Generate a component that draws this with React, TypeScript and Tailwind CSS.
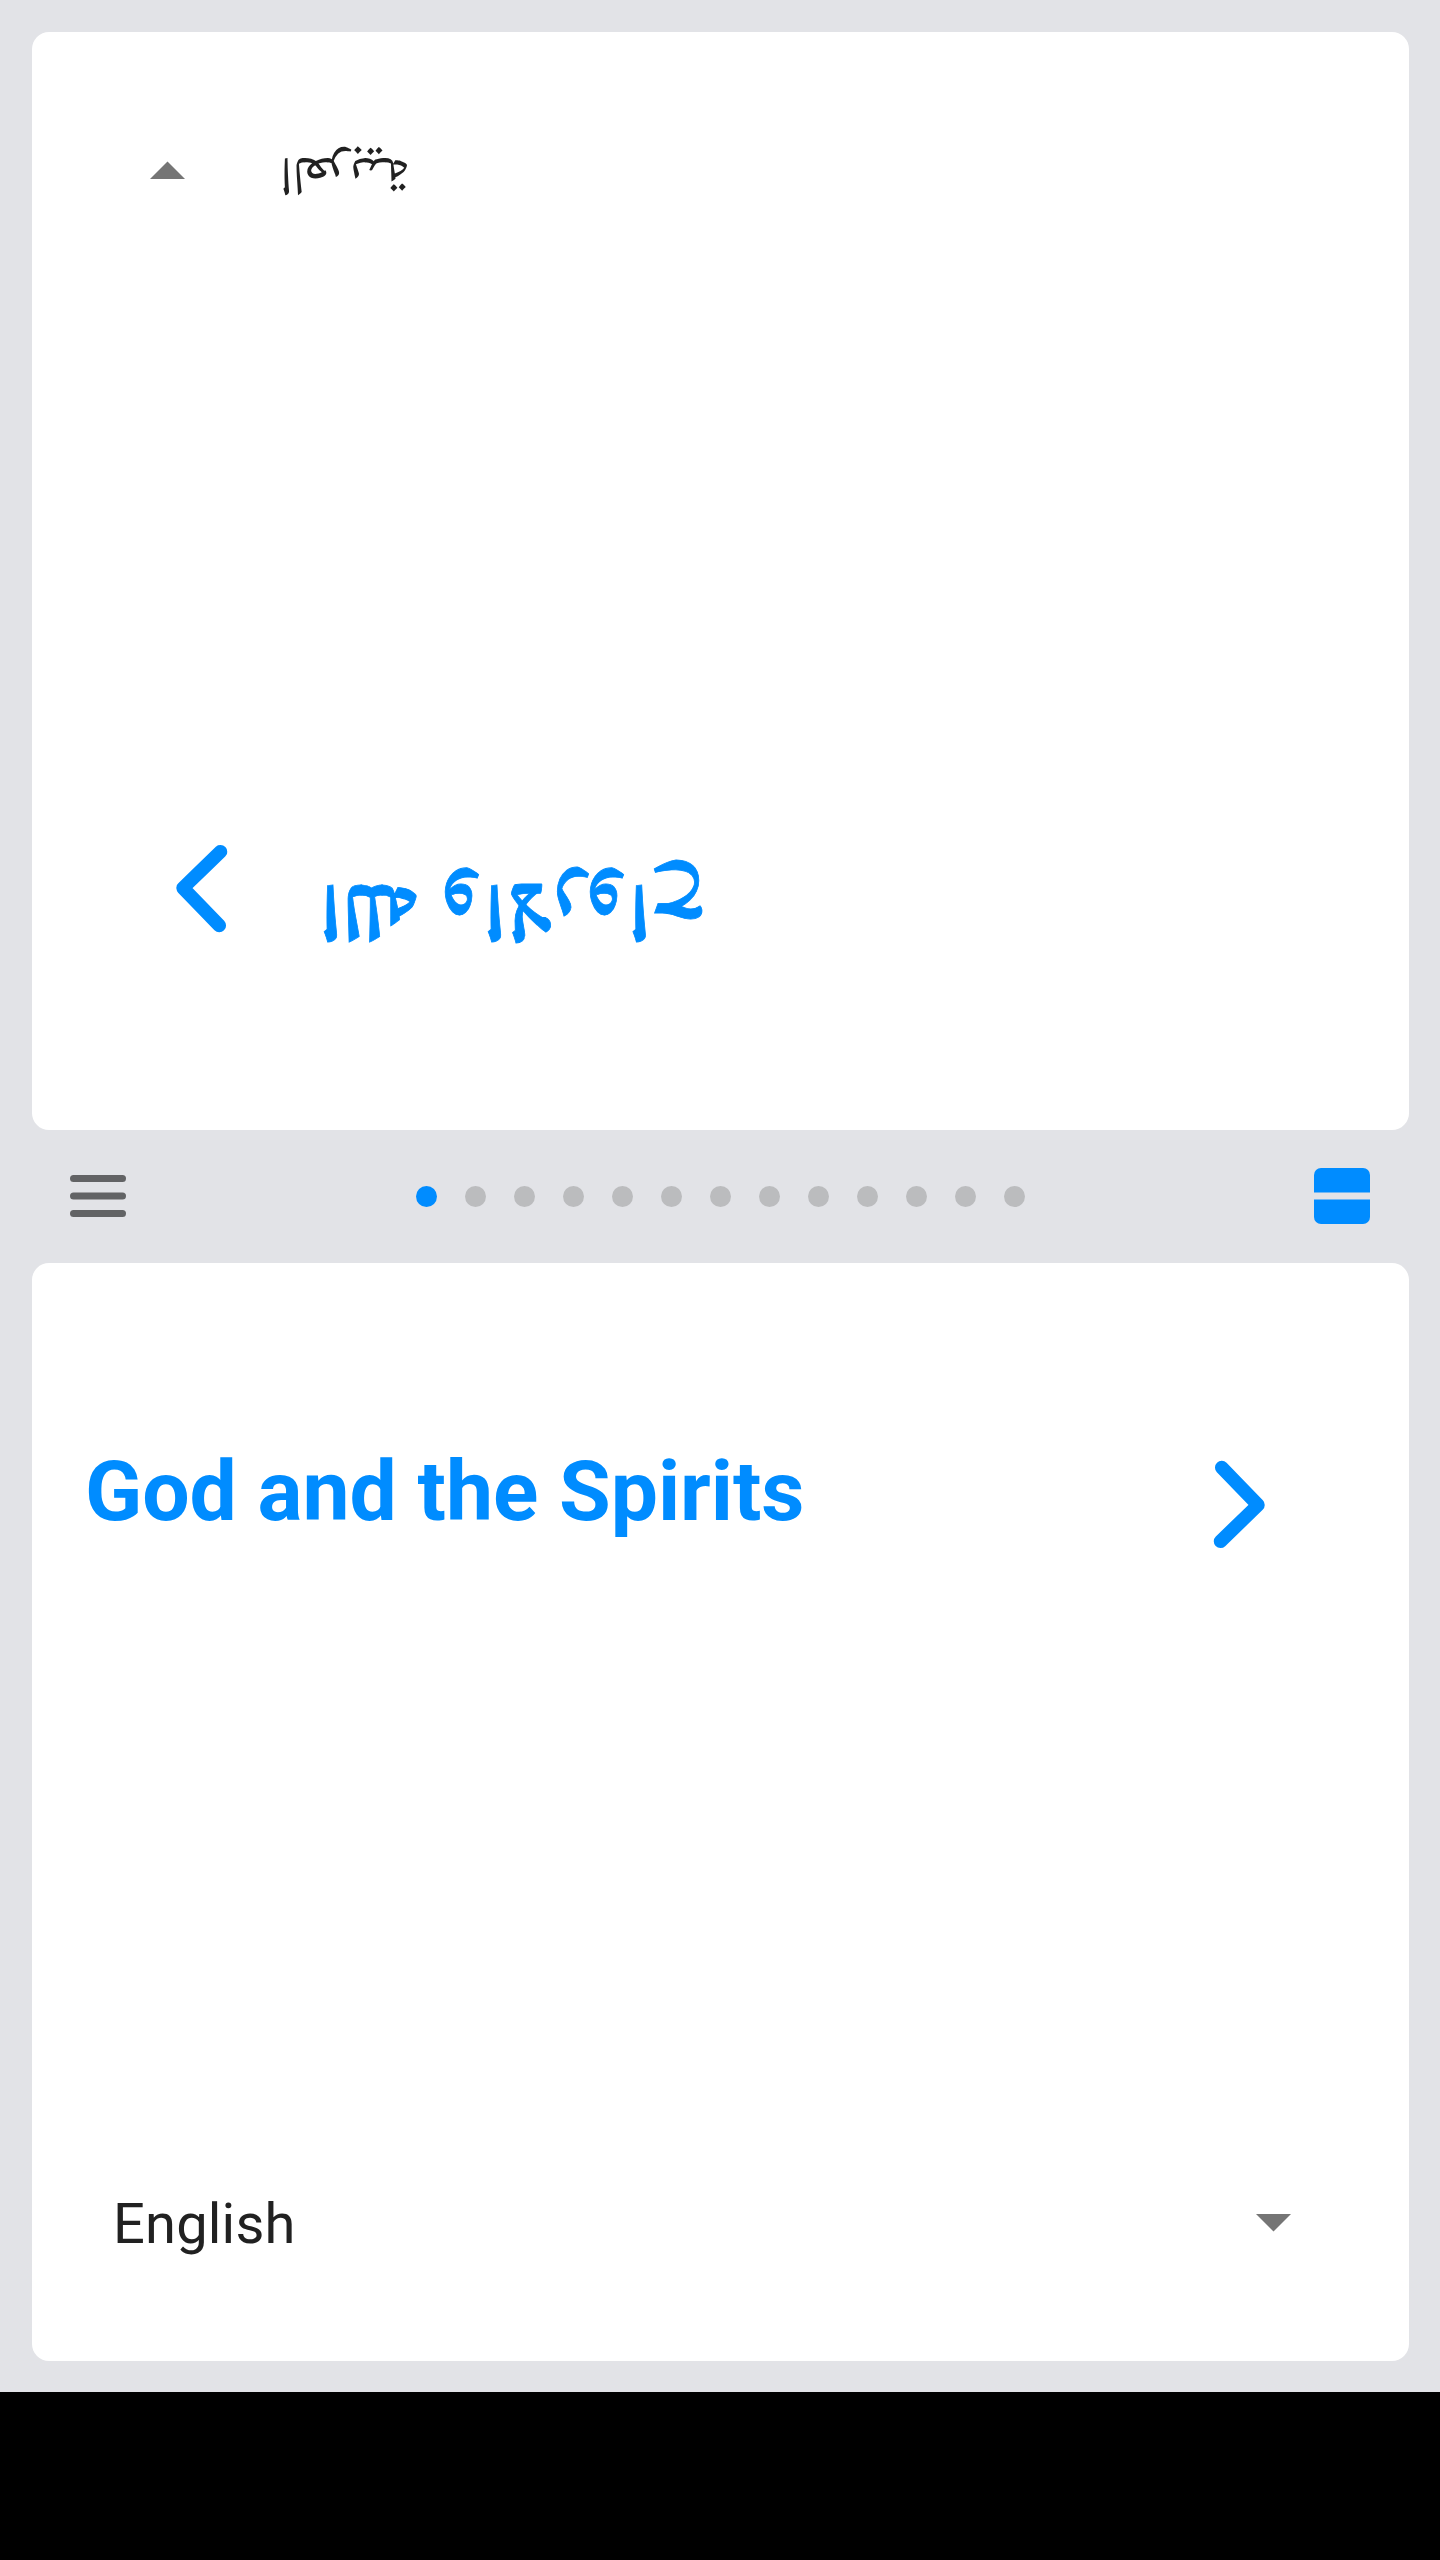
type PanelProps = { title: string; language: string; rtl?: boolean };

function Panel({ title, language, rtl = false }: PanelProps) {
  return (
    <section
      className={`flex h-[1098px] w-[1377px] flex-col justify-between rounded-[17px] bg-white ${rtl ? "rotate-180 font-['Noto_Naskh_Arabic','DejaVu_Sans',sans-serif]" : "font-['Roboto',sans-serif]"}`}
    >
      <div className="flex items-start pt-[179px] pl-[53px]">
        <h1
          dir={rtl ? "rtl" : "ltr"}
          className={`h-[98px] leading-[98px] font-bold whitespace-nowrap text-[#008cff] ${rtl ? "mr-[-4px] w-[1037px] text-[85px] [-webkit-text-stroke:0.8px_#008cff]" : "w-[1033px] pt-px text-[84px] tracking-[-0.06px]"}`}
        >
          {title}
        </h1>
        <svg className="mt-[15px] ml-[95px] h-[96px] w-[60px] shrink-0" viewBox="1213 1457 60 96" fill="none" stroke="#008cff" strokeWidth="13.5" strokeLinecap="round" strokeLinejoin="round">
          <path d="M1221.7 1467.5 L1258 1505 L1220.5 1541.3" />
        </svg>
      </div>
      <div className="mb-[105px] flex h-[66px] items-center pl-[80px]">
        <span
          dir={rtl ? "rtl" : "ltr"}
          className={`leading-[66px] whitespace-nowrap text-[#212121] ${rtl ? "mr-[-3px] w-[1049px] text-[55.5px]" : "w-[1046px] pt-[2px] pl-px text-[56px] tracking-[0.2px]"}`}
        >
          {language}
        </span>
        <svg className="ml-[98px] h-[18px] w-[35px]" viewBox="0 0 35 18" fill="#757575">
          <path d="M0 0H35L17.5 17.5Z" />
        </svg>
      </div>
    </section>
  );
}

function Toolbar() {
  return (
    <nav className="flex h-[133px] w-full items-center justify-between px-[70px]">
      <svg className="mb-px h-[42px] w-[56px]" viewBox="0 0 56 42" fill="#626365">
        <rect width="56" height="7" rx="3.5" />
        <rect y="17.5" width="56" height="7" rx="3.5" />
        <rect y="35" width="56" height="7" rx="3.5" />
      </svg>
      <div className="flex gap-[28px]">
        {Array.from({ length: 13 }, (_, i) => (
          <span key={i} className={`size-[21px] rounded-full ${i === 0 ? "bg-[#008cff]" : "bg-[#bbbcbe]"}`} />
        ))}
      </div>
      <svg className="mb-px size-[56px]" viewBox="0 0 56 56" fill="#008cff">
        <path d="M0 24.5V7A7 7 0 0 1 7 0H49A7 7 0 0 1 56 7V24.5Z" />
        <path d="M0 31.5V49A7 7 0 0 0 7 56H49A7 7 0 0 0 56 49V31.5Z" />
      </svg>
    </nav>
  );
}

export default function App() {
  return (
    <main className="flex h-[2560px] w-[1440px] flex-col overflow-hidden bg-black">
      <div className="flex h-[2392px] flex-col items-start bg-[#e2e3e7] pt-[32px]">
        <div className="pl-[32px]">
          <Panel title="الله والارواح" language="العربية" rtl />
        </div>
        <Toolbar />
        <div className="pl-[32px]">
          <Panel title="God and the Spirits" language="English" />
        </div>
      </div>
    </main>
  );
}
